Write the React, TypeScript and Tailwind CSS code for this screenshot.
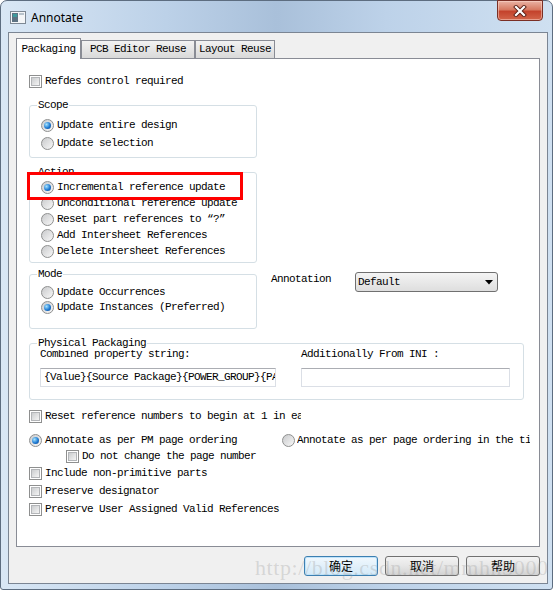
import React from "react";

const Check = () => (
  <span className="block h-[13px] w-[13px] shrink-0 border border-[#8e8f8f] bg-white p-px">
    <span className="block h-full w-full border border-[#b3b5b8] bg-gradient-to-br from-[#cbcdcf] to-[#f5f5f5]" />
  </span>
);

const Radio = ({ on = false }: { on?: boolean }) => (
  <span className="flex h-[13px] w-[13px] shrink-0 items-center justify-center rounded-full border border-[#8e8f8f] bg-gradient-to-br from-[#c9cacc] to-[#f8f8f8]">
    {on && (
      <span className="h-[7px] w-[7px] rounded-full bg-[radial-gradient(circle_at_35%_35%,#a6e4ff,#1e7ad2_55%,#0a3d85)]" />
    )}
  </span>
);

const Group = ({
  label,
  className,
  children,
}: {
  label: string;
  className: string;
  children: React.ReactNode;
}) => (
  <div className={"relative rounded-[3px] border border-[#d5dfe5] " + className}>
    <span className="absolute left-[7px] top-[-8px] bg-white px-px leading-[14px]">{label}</span>
    {children}
  </div>
);

const Tab = ({ label, active, w }: { label: string; active?: boolean; w: string }) =>
  active ? (
    <div className={"relative z-10 -mb-px flex h-[21px] items-center justify-center border border-b-0 border-[#898c95] bg-white " + w}>
      {label}
    </div>
  ) : (
    <div className={"flex h-[18px] items-center justify-center border border-b-0 border-[#898c95] bg-gradient-to-b from-[#f2f2f2] to-[#d9d9d9] " + w}>
      {label}
    </div>
  );

const Button = ({ label, focus }: { label: string; focus?: boolean }) => (
  <div
    className={
      "flex h-[20px] w-[74px] items-center justify-center rounded-[3px] border font-['Noto_Sans_CJK_SC',sans-serif] text-[12px] tracking-normal " +
      (focus
        ? "border-[#3c7fb1] bg-gradient-to-b from-[#f1f8fd] to-[#d3e9f8] shadow-[inset_0_0_0_1px_#bfe3fa]"
        : "border-[#707070] bg-gradient-to-b from-[#f3f3f3] via-[#e6e6e6] to-[#d2d2d2]")
    }
  >
    {label}
  </div>
);

export default function App() {
  return (
    <div className="relative h-[592px] w-[556px] bg-white">
      <div className="flex h-[590px] w-[553px] flex-col rounded-t-[7px] rounded-b-[3px] border border-[#5d6d80] bg-[linear-gradient(90deg,#d9e7f5,#bcd1e8_30%,#a9c0da_50%,#bdd2e9_70%,#cfe0f1)] pb-[5px] pl-[7px] pr-[4px]">
        {/* title bar */}
        <div className="flex h-[31px] shrink-0 items-start pl-[2px]">
          <svg className="mt-[10px]" width="16" height="13" viewBox="0 0 16 13">
            <rect x="0.5" y="0.5" width="15" height="12" fill="#f4f6f8" stroke="#7d8894" />
            <rect x="2" y="2" width="6" height="9" fill="#5d7282" />
            <rect x="3" y="3" width="4" height="3" fill="#3e9a9c" />
            <rect x="9" y="2" width="5" height="2" fill="#b8c3cc" />
          </svg>
          <span className="ml-[5px] mt-[9px] font-['Noto_Sans',sans-serif] text-[12px] leading-[16px] text-black">
            Annotate
          </span>
          <div className="-mt-px ml-auto mr-[5px] flex h-[21px] w-[46px] items-center justify-center rounded-b-[4px] border border-[#7a2f25] bg-[linear-gradient(180deg,#eab3a4,#d77a62_45%,#c4432c_55%,#d2654a)] shadow-[inset_0_0_0_1px_rgba(255,220,210,0.5)]">
            <svg width="14" height="12" viewBox="0 0 14 12">
              <path d="M3 2 L11 10 M11 2 L3 10" stroke="#5a1f16" strokeWidth="4" strokeLinecap="square" />
              <path d="M3 2 L11 10 M11 2 L3 10" stroke="#ffffff" strokeWidth="2.2" strokeLinecap="square" />
            </svg>
          </div>
        </div>

        {/* client area */}
        <div className="flex h-[552px] w-[540px] flex-col border border-[#7b8593] bg-[#f0f0f0] pl-[7px] pr-[7px] pt-[5px] font-['Liberation_Mono',monospace] text-[11px] tracking-[-0.6px] text-black">
          <div className="flex h-[20px] items-end">
            <Tab label="Packaging" active w="w-[65px]" />
            <Tab label="PCB Editor Reuse" w="w-[114px]" />
            <Tab label="Layout Reuse" w="w-[80px]" />
          </div>

          <div className="flex h-[489px] w-[524px] flex-col border border-[#898c95] bg-white pl-[12px] pt-[15px]">
            <div className="flex h-[14px] items-center gap-[3px]">
              <Check />
              <span>Refdes control required</span>
            </div>

            <Group label="Scope" className="mt-[17px] w-[228px] pb-[5px] pl-[11px] pt-[10px]">
              <div className="flex h-[18px] items-center gap-[3px]">
                <Radio on />
                <span>Update entire design</span>
              </div>
              <div className="flex h-[18px] items-center gap-[3px]">
                <Radio />
                <span>Update selection</span>
              </div>
            </Group>

            <Group label="Action" className="mt-[14px] w-[228px] pb-[3px] pl-[11px] pt-[6px]">
              <div className="flex h-[16px] items-center gap-[3px]">
                <Radio on />
                <span>Incremental reference update</span>
              </div>
              <div className="flex h-[16px] items-center gap-[3px]">
                <Radio />
                <span>Unconditional reference update</span>
              </div>
              <div className="flex h-[16px] items-center gap-[3px]">
                <Radio />
                <span>Reset part references to “?”</span>
              </div>
              <div className="flex h-[16px] items-center gap-[3px]">
                <Radio />
                <span>Add Intersheet References</span>
              </div>
              <div className="flex h-[16px] items-center gap-[3px]">
                <Radio />
                <span>Delete Intersheet References</span>
              </div>
              <div className="pointer-events-none absolute left-[-3px] top-[-1px] h-[28px] w-[216px] border-[3px] border-[#ff0000]" />
            </Group>

            <div className="mt-[9px] flex items-start">
              <Group label="Mode" className="mt-[2px] w-[228px] pb-[13px] pl-[11px] pt-[10px]">
                <div className="flex h-[15px] items-center gap-[3px]">
                  <Radio />
                  <span>Update Occurrences</span>
                </div>
                <div className="flex h-[15px] items-center gap-[3px]">
                  <Radio on />
                  <span>Update Instances (Preferred)</span>
                </div>
              </Group>
              <span className="ml-[14px] w-[84px] leading-[14px]">Annotation</span>
              <div className="flex h-[20px] w-[143px] items-center justify-between rounded-[3px] border border-[#707070] bg-gradient-to-b from-[#f4f4f4] to-[#dedede] pl-[2px] pr-[4px]">
                <span>Default</span>
                <svg width="8" height="5" viewBox="0 0 8 5">
                  <path d="M0 0 H8 L4 4.5 Z" fill="#000" />
                </svg>
              </div>
            </div>

            <Group label="Physical Packaging" className="mt-[14px] flex w-[495px] pb-[12px] pl-[10px] pt-[3px]">
              <div className="w-[236px]">
                <div className="h-[14px] leading-[14px]">Combined property string:</div>
                <div className="mt-[7px] h-[19px] overflow-hidden whitespace-nowrap border border-[#dbdfe6] border-t-[#abadb3] pl-[3px] leading-[17px]">
                  {"{Value}{Source Package}{POWER_GROUP}{PACK_SHORT}"}
                </div>
              </div>
              <div className="ml-[25px] w-[209px]">
                <div className="h-[14px] leading-[14px]">Additionally From INI :</div>
                <div className="mt-[7px] h-[19px] border border-[#dbdfe6] border-t-[#abadb3]" />
              </div>
            </Group>

            <div className="mt-[7px] flex h-[18px] items-center gap-[3px]">
              <Check />
              <span className="w-[256px] overflow-hidden whitespace-nowrap">
                Reset reference numbers to begin at 1 in each page
              </span>
            </div>

            <div className="mt-[7px] flex h-[16px] items-center">
              <div className="flex w-[253px] items-center gap-[3px]">
                <Radio on />
                <span>Annotate as per PM page ordering</span>
              </div>
              <Radio />
              <span className="ml-[2px] w-[233px] overflow-hidden whitespace-nowrap">
                Annotate as per page ordering in the title block
              </span>
            </div>
            <div className="ml-[37px] flex h-[16px] items-center gap-[3px]">
              <Check />
              <span>Do not change the page number</span>
            </div>
            <div className="flex h-[18px] items-center gap-[3px]">
              <Check />
              <span>Include non-primitive parts</span>
            </div>
            <div className="flex h-[18px] items-center gap-[3px]">
              <Check />
              <span>Preserve designator</span>
            </div>
            <div className="flex h-[18px] items-center gap-[3px]">
              <Check />
              <span>Preserve User Assigned Valid References</span>
            </div>
          </div>

          <div className="mt-[9px] flex justify-end gap-[7px]">
            <Button label="确定" focus />
            <Button label="取消" />
            <Button label="帮助" />
          </div>
        </div>
      </div>

      <div className="pointer-events-none absolute left-[255px] top-[557px] whitespace-nowrap font-['Liberation_Serif',serif] text-[22px] leading-[22px] tracking-[0.6px] text-[rgba(150,150,150,0.3)]">
        http://blog.csdn.net/mmhh3000
      </div>
    </div>
  );
}
